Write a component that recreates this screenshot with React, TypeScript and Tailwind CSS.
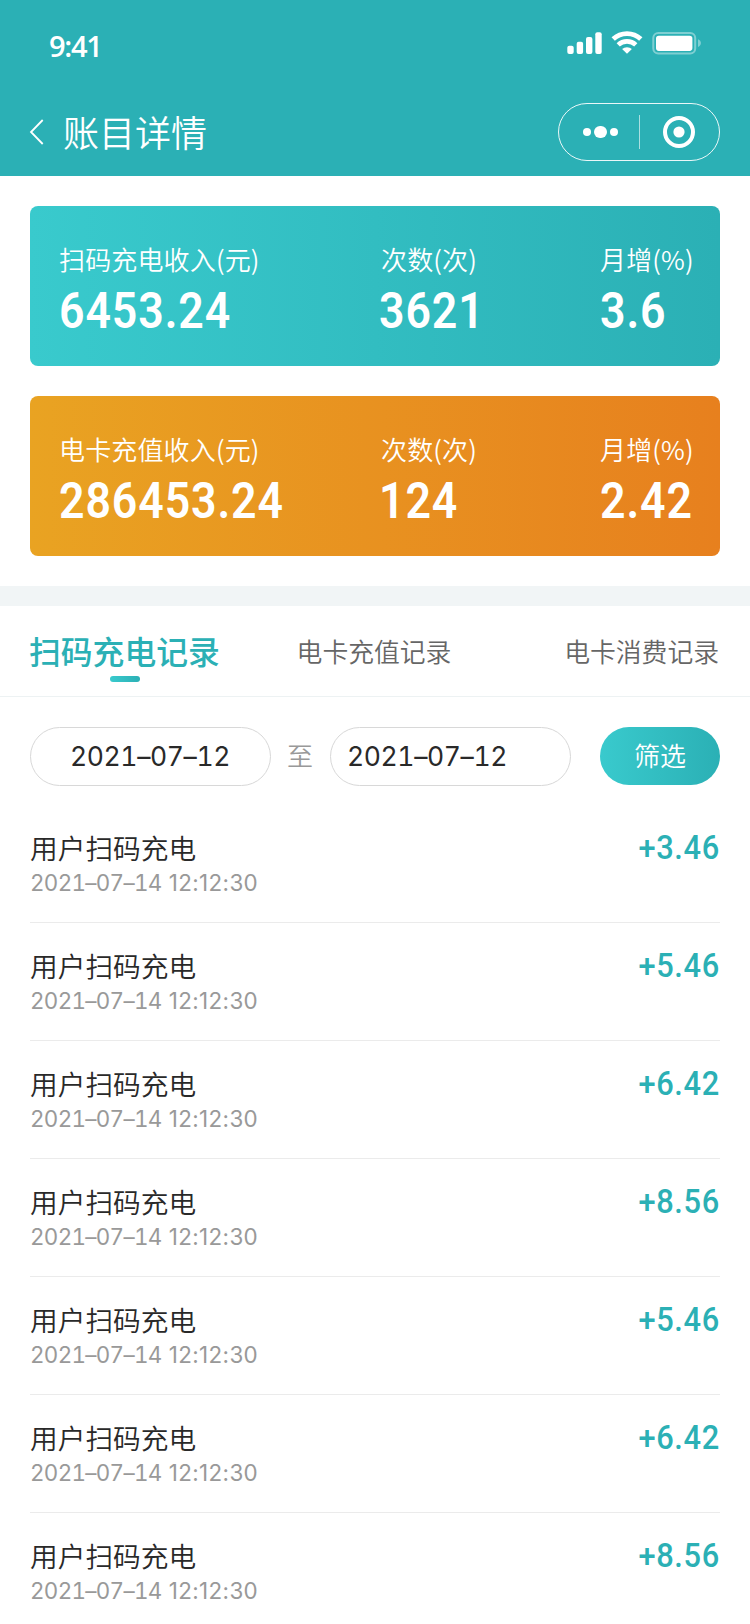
import React from "react";

type Stat = { label: string; value: string };

const scanStats: Stat[] = [
  { label: "扫码充电收入(元)", value: "6453.24" },
  { label: "次数(次)", value: "3621" },
  { label: "月增(%)", value: "3.6" },
];

const cardStats: Stat[] = [
  { label: "电卡充值收入(元)", value: "286453.24" },
  { label: "次数(次)", value: "124" },
  { label: "月增(%)", value: "2.42" },
];

const records = ["+3.46", "+5.46", "+6.42", "+8.56", "+5.46", "+6.42", "+8.56"];

function StatusIcons() {
  return (
    <svg width="136" height="24" viewBox="0 0 136 24" fill="none">
      <g fill="#fff">
        <rect x="0.3" y="14.7" width="6.4" height="8.2" rx="2" />
        <rect x="9.7" y="10.7" width="6.4" height="12.2" rx="2" />
        <rect x="19" y="6" width="6.4" height="16.9" rx="2" />
        <rect x="28.3" y="1.3" width="6.4" height="21.6" rx="2" />
      </g>
      <path d="M46.2 8.1a20 20 0 0 1 27.6 0" stroke="#fff" strokeWidth="4.8" />
      <path d="M51.2 13.9a12.7 12.7 0 0 1 17.6 0" stroke="#fff" strokeWidth="4.6" />
      <path d="M60 22.8l-4.9-4.7a7.6 7.6 0 0 1 9.8 0z" fill="#fff" />
      <rect x="86.3" y="2" width="41.9" height="20.4" rx="5" stroke="#fff" strokeOpacity="0.4" strokeWidth="2" />
      <rect x="89" y="4.7" width="36.4" height="15.2" rx="2.8" fill="#fff" />
      <path d="M131 8.2c3.9 1.4 3.9 6.3 0 7.7z" fill="#fff" fillOpacity="0.4" />
    </svg>
  );
}

function StatCard({ stats, tone }: { stats: Stat[]; tone: string }) {
  return (
    <div className={`grid h-[160px] grid-cols-[322px_219px_1fr] rounded-lg pt-[34px] pl-[29px] text-white ${tone}`}>
      {stats.map((s) => (
        <div key={s.label} className="group flex flex-col items-start whitespace-nowrap">
          <span className="text-[26px] leading-[38px] font-[350] tracking-[0.15px]">{s.label}</span>
          <span className="mt-[5px] origin-left scale-x-[0.885] font-['Roboto',sans-serif] text-[50.5px] leading-[56px] font-semibold tracking-[1px] group-[&:nth-child(2)]:ml-[-2px]">
            {s.value}
          </span>
        </div>
      ))}
    </div>
  );
}

export default function App() {
  return (
    <div className="h-[1624px] w-[750px] overflow-hidden bg-white font-['Noto_Sans_CJK_SC',sans-serif]">
      <header className="flex h-[176px] flex-col bg-[#2bb0b5] text-white">
        <div className="flex h-[88px] items-start justify-between pt-[31px] pr-[47px] pl-[49px]">
          <span className="mt-[-5px] font-['Open_Sans',sans-serif] text-[29px] leading-[40px] font-semibold tracking-[-1.3px]">9:41</span>
          <StatusIcons />
        </div>
        <div className="flex h-[88px] items-center justify-between pr-[30px] pl-[29px]">
          <div className="flex items-center">
            <svg width="16" height="26" viewBox="0 0 16 26" fill="none" stroke="#fff" strokeWidth="1.8">
              <path d="M13.7 1L2 13l11.7 12" />
            </svg>
            <h1 className="mb-[2px] ml-[18px] text-[36px] leading-[48px] font-[350]">账目详情</h1>
          </div>
          <div className="flex h-[58px] w-[162px] items-center rounded-full border border-white/90">
            <div className="flex w-[80px] items-center justify-center gap-[3px] pl-[3px]">
              <i className="size-2 rounded-full bg-white" />
              <i className="size-[12.5px] rounded-full bg-white" />
              <i className="size-2 rounded-full bg-white" />
            </div>
            <div className="h-[34px] w-px bg-white/60" />
            <div className="flex flex-1 justify-center pr-[2px]">
              <svg width="32" height="32" viewBox="0 0 32 32">
                <circle cx="16" cy="16" r="14" fill="none" stroke="#fff" strokeWidth="4" />
                <circle cx="16" cy="16" r="5.6" fill="#fff" />
              </svg>
            </div>
          </div>
        </div>
      </header>

      <section className="flex flex-col gap-[30px] border-b-[20px] border-[#f1f5f6] p-[30px]">
        <StatCard stats={scanStats} tone="bg-[linear-gradient(90deg,#39cacd,#2bb0b5)]" />
        <StatCard stats={cardStats} tone="bg-[linear-gradient(90deg,#e9a322,#e7801e)]" />
      </section>

      <nav className="grid h-[91px] grid-cols-[1fr_auto_1fr] items-start border-b border-[#edf2f3] pr-[31px] pl-[29px] pt-[21px] text-[25.8px] leading-[48px] font-[350] text-[#666]">
        <div className="flex flex-col items-center justify-self-start text-[31.8px] font-medium text-[#2bb0b5]">
          <span className="leading-[46px]">扫码充电记录</span>
          <i className="mt-[3px] ml-[1px] h-[6px] w-[30px] rounded-full bg-[linear-gradient(90deg,#39cacd,#2bb0b5)]" />
        </div>
        <span>电卡充值记录</span>
        <span className="justify-self-end">电卡消费记录</span>
      </nav>

      <div className="mx-[30px] mt-[30px] flex h-[59px] items-center text-[#292929]">
        <div className="flex h-[59px] w-[241px] items-center rounded-full border border-[#d8d8d8] pl-[39px] font-['Inter',sans-serif] text-[26.5px] tracking-[-0.4px] tabular-nums">2021–07–12</div>
        <span className="mb-[4px] w-[58px] text-center text-[26px] font-[350] text-[#999]">至</span>
        <div className="ml-px flex h-[59px] w-[241px] items-center rounded-full border border-[#d8d8d8] pl-[16px] font-['Inter',sans-serif] text-[26.5px] tracking-[-0.4px] tabular-nums">2021–07–12</div>
        <button className="ml-auto h-[58px] w-[120px] self-start rounded-full bg-[linear-gradient(90deg,#39cacd,#2bb0b5)] pb-[3px] text-[26px] font-[350] text-white">筛选</button>
      </div>

      <ul className="mx-[30px] mt-[19px]">
        {records.map((amount, i) => (
          <li key={i} className="flex h-[118px] items-start justify-between border-b border-[#ebebeb] pt-[22px]">
            <div>
              <p className="text-[27.7px] leading-[40px] font-[350] text-[#292929]">用户扫码充电</p>
              <p className="mt-[1px] font-['Inter',sans-serif] text-[22.4px] leading-[30px] text-[#999]">
                <span className="tracking-[-0.7px] tabular-nums">2021–07–14</span> <span className="ml-[1px] tracking-[0.35px]">12:12:30</span>
              </p>
            </div>
            <span className="origin-right scale-x-[0.905] font-['Roboto',sans-serif] text-[34px] leading-[40px] font-medium tracking-[0.7px] text-[#2bb0b5]">{amount}</span>
          </li>
        ))}
      </ul>
    </div>
  );
}
